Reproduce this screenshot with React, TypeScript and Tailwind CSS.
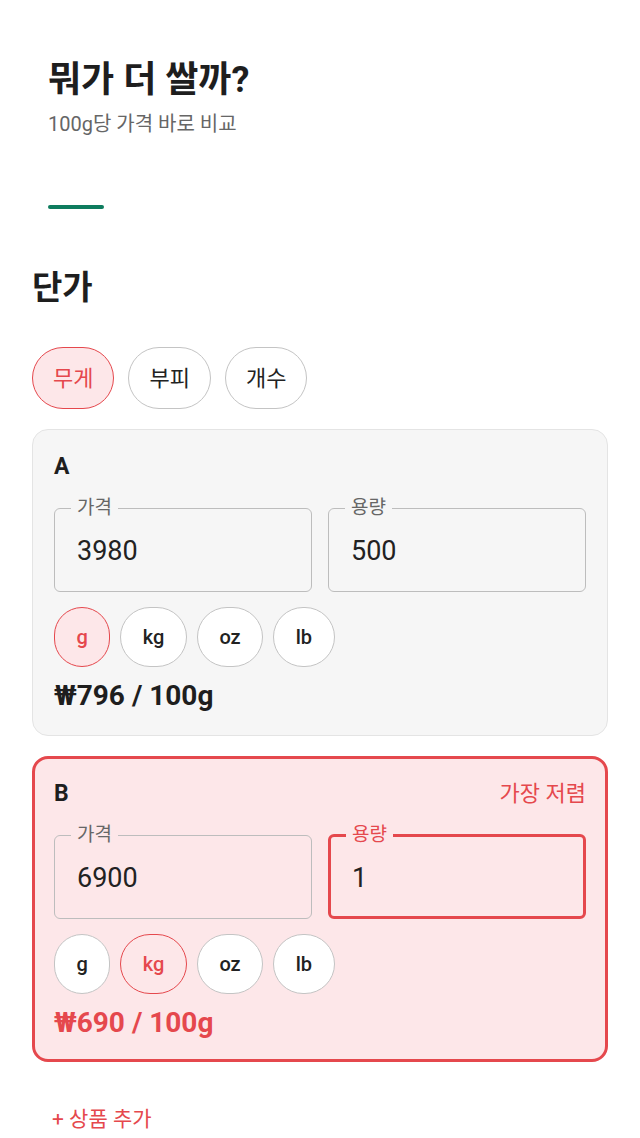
import { FC } from "react";

const red = "#e5484d";

type Item = {
  name: string;
  price: string;
  amount: string;
  unit: string;
  perUnit: string;
  cheapest?: boolean;
};

const items: Item[] = [
  { name: "A", price: "3980", amount: "500", unit: "g", perUnit: "₩796 / 100g" },
  { name: "B", price: "6900", amount: "1", unit: "kg", perUnit: "₩690 / 100g", cheapest: true },
];

const units = ["g", "kg", "oz", "lb"];
const kinds = ["무게", "부피", "개수"];

const Field: FC<{ label: string; value: string; focused?: boolean }> = ({ label, value, focused }) => (
  <fieldset
    className={
      focused
        ? "min-w-0 rounded-[6px] border-[3px] border-[#e5484d] pl-[21px] pr-3 pt-[15px] pb-[22px]"
        : "min-w-0 rounded-[6px] border-[1.5px] border-[#bdbdbd] pl-[22px] pr-3 pt-[15px] pb-[24px]"
    }
  >
    <legend
      className={
        focused
          ? "-ml-[6px] px-[6px] text-[19px] leading-6 text-[#e5484d]"
          : "-ml-[6px] px-[6px] text-[19px] leading-6 text-[#666]"
      }
    >
      {label}
    </legend>
    <input
      readOnly
      value={value}
      className="block w-full bg-transparent text-[27px] leading-8 text-[#222] outline-none"
    />
  </fieldset>
);

const Card: FC<{ item: Item }> = ({ item }) => (
  <div
    className={
      item.cheapest
        ? "rounded-[16px] border-[3px] border-[#e5484d] bg-[#fde7e9] px-[19px] pt-[20px] pb-[19px]"
        : "rounded-[16px] border border-[#e4e4e4] bg-[#f6f6f6] px-[21px] pt-[22px] pb-[22px]"
    }
  >
    <div className="flex items-center justify-between">
      <span className="text-[23px] font-bold leading-[30px] text-[#1e1e1e]">{item.name}</span>
      {item.cheapest && <span className="text-[22px] leading-[30px] text-[#e5484d]">가장 저렴</span>}
    </div>
    <div className="mt-[14px] grid grid-cols-2 gap-4">
      <Field label="가격" value={item.price} />
      <Field label="용량" value={item.amount} focused={item.cheapest} />
    </div>
    <div className="mt-[15px] flex gap-[10px]">
      {units.map((u) => (
        <button
          key={u}
          className={
            u === item.unit
              ? "h-[60px] min-w-[56px] rounded-full border-[1.5px] border-[#e5484d] px-[21.5px] text-[20px] font-medium text-[#e5484d] " +
                (item.cheapest ? "bg-transparent" : "bg-[#fde7e9]")
              : "h-[60px] min-w-[56px] rounded-full border-[1.5px] border-[#c4c4c4] bg-white px-[21.5px] text-[20px] font-medium text-[#222]"
          }
        >
          {u}
        </button>
      ))}
    </div>
    <div
      className="mt-3 text-[28px] font-bold leading-[34px]"
      style={{ color: item.cheapest ? red : "#1e1e1e" }}
    >
      {item.perUnit}
    </div>
  </div>
);

export default function App() {
  return (
    <div
      className="min-h-screen bg-white pb-10"
      style={{ fontFamily: "Roboto, 'Noto Sans CJK KR', sans-serif" }}
    >
      <header className="px-12 pt-[60px]">
        <h1 className="text-[36px] font-bold leading-10 text-[#1e1e1e]">뭐가 더 쌀까?</h1>
        <p className="mt-[11px] text-[20px] leading-[26px] text-[#666]">100g당 가격 바로 비교</p>
        <div className="mt-[68px] h-1 w-14 rounded-full bg-[#0e7c5e]" />
      </header>

      <main className="px-8 pt-[59px]">
        <h2 className="text-[33px] font-bold leading-10 text-[#1e1e1e]">단가</h2>

        <div className="mt-[39px] flex gap-[14px]">
          {kinds.map((k, i) => (
            <button
              key={k}
              className={
                i === 0
                  ? "h-[62px] rounded-full border-[1.5px] border-[#e5484d] bg-[#fde7e9] px-[20px] text-[22px] text-[#e5484d]"
                  : "h-[62px] rounded-full border-[1.5px] border-[#c4c4c4] bg-white px-[20px] text-[22px] text-[#222]"
              }
            >
              {k}
            </button>
          ))}
        </div>

        <div className="mt-5 flex flex-col gap-5">
          {items.map((it) => (
            <Card key={it.name} item={it} />
          ))}
        </div>

        <button className="mt-[43px] px-5 text-[21px] leading-7 text-[#e5484d]">+ 상품 추가</button>
      </main>
    </div>
  );
}
